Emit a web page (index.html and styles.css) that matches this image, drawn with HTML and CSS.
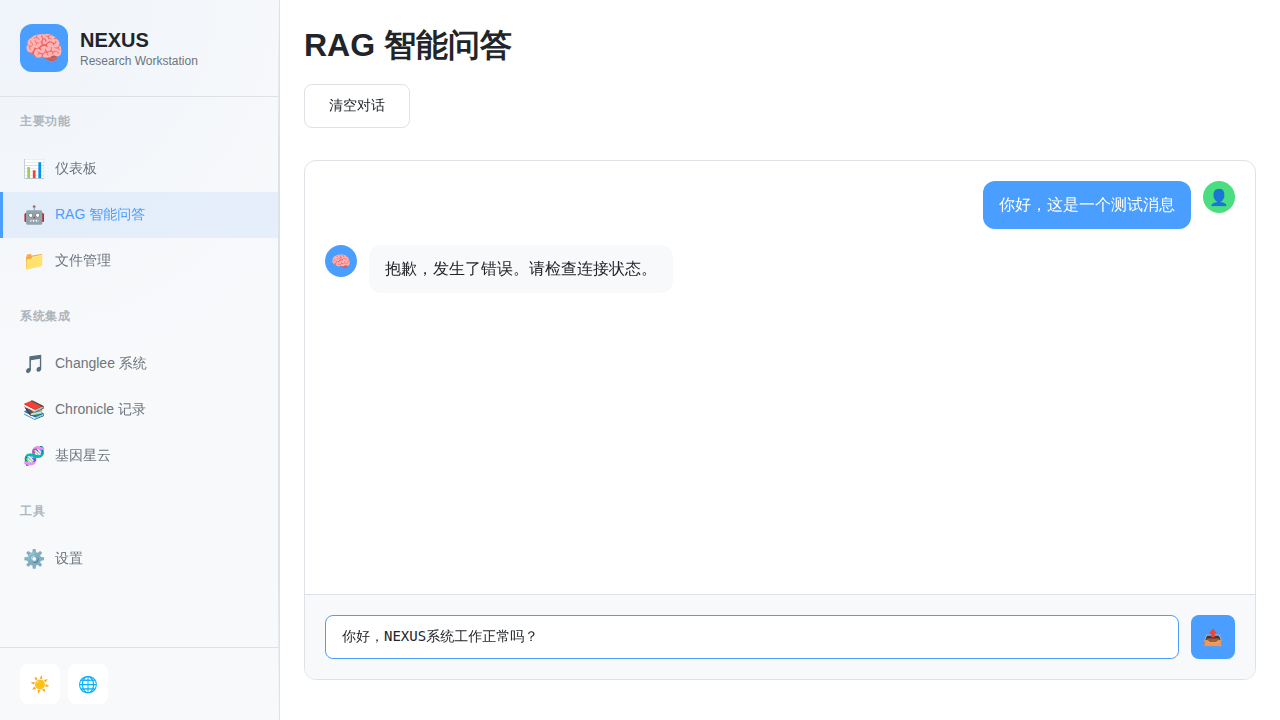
FILE: index.html
```html
<!DOCTYPE html>
<html lang="en">
<head>
<meta charset="utf-8">
<title>NEXUS Research Workstation</title>
<link rel="stylesheet" href="styles.css">
</head>
<body>
<div class="app">
  <aside class="sidebar">
    <header class="brand">
      <div class="brand-logo">🧠</div>
      <div class="brand-text">
        <div class="brand-name">NEXUS</div>
        <div class="brand-sub">Research Workstation</div>
      </div>
    </header>
    <nav class="nav">
      <section class="nav-section">
        <h2 class="nav-title">主要功能</h2>
        <a class="nav-item" href="#dashboard"><span class="nav-icon">📊</span><span class="nav-label">仪表板</span></a>
        <a class="nav-item active" href="#rag" aria-current="page"><span class="nav-icon">🤖</span><span class="nav-label">RAG 智能问答</span></a>
        <a class="nav-item" href="#files"><span class="nav-icon">📁</span><span class="nav-label">文件管理</span></a>
      </section>
      <section class="nav-section">
        <h2 class="nav-title">系统集成</h2>
        <a class="nav-item" href="#changlee"><span class="nav-icon">🎵</span><span class="nav-label">Changlee 系统</span></a>
        <a class="nav-item" href="#chronicle"><span class="nav-icon">📚</span><span class="nav-label">Chronicle 记录</span></a>
        <a class="nav-item" href="#genome"><span class="nav-icon">🧬</span><span class="nav-label">基因星云</span></a>
      </section>
      <section class="nav-section">
        <h2 class="nav-title">工具</h2>
        <a class="nav-item" href="#settings"><span class="nav-icon">⚙️</span><span class="nav-label">设置</span></a>
      </section>
    </nav>
    <footer class="sidebar-footer">
      <button class="tool-btn" type="button" aria-label="切换主题">☀️</button>
      <button class="tool-btn" type="button" aria-label="切换语言">🌐</button>
    </footer>
  </aside>
  <main class="main">
    <h1 class="page-title">RAG 智能问答</h1>
    <div class="actions"><button class="btn" type="button">清空对话</button></div>
    <section class="chat">
      <div class="messages">
        <div class="message user">
          <div class="avatar">👤</div>
          <div class="bubble">你好，这是一个测试消息</div>
        </div>
        <div class="message">
          <div class="avatar">🧠</div>
          <div class="bubble">抱歉，发生了错误。请检查连接状态。</div>
        </div>
      </div>
      <form class="composer">
        <textarea class="composer-input" rows="1" aria-label="消息">你好，NEXUS系统工作正常吗？</textarea>
        <button class="send-btn" type="button" aria-label="发送">📤</button>
      </form>
    </section>
  </main>
</div>
</body>
</html>
```
FILE: styles.css
```css
* { box-sizing: border-box; margin: 0; padding: 0; }

body {
  font-family: "Liberation Sans", "WenQuanYi Zen Hei", "Noto Sans CJK SC", sans-serif;
  font-size: 16px;
  line-height: 24px;
  color: #212529;
  background: #fff;
}

.app { display: flex; height: 100vh; }

.sidebar {
  position: relative;
  display: flex;
  flex-direction: column;
  flex: none;
  width: 280px;
  background: #f8f9fb;
  background-image: radial-gradient(circle at 0 0, #eff4fa, #f8f9fb 380px);
  border-right: 1px solid #dee2e6;
}

.sidebar::after {
  position: absolute;
  top: 0;
  right: 0;
  bottom: 0;
  width: 1px;
  content: "";
  background: linear-gradient(transparent, #dee2e6 20%, #dee2e6 80%, transparent);
}

.brand {
  display: flex;
  align-items: center;
  gap: 12px;
  padding: 24px 20px;
  border-bottom: 1px solid #dee2e6;
}

.brand-logo {
  display: flex;
  align-items: center;
  justify-content: center;
  width: 48px;
  height: 48px;
  font-size: 32px;
  background: #4a9eff;
  border-radius: 12px;
}

.brand-name { font-size: 20px; font-weight: 700; line-height: 26px; }
.brand-sub { font-size: 12px; line-height: 16px; color: #6c757d; }

.nav { flex: 1; padding: 16px 0; overflow: hidden; }
.nav-section { margin-bottom: 24px; }

.nav-title,
.page-title { font-family: "Liberation Sans", sans-serif; }

.nav-title {
  padding: 0 20px;
  margin-bottom: 17px;
  font-size: 12px;
  line-height: 16px;
  letter-spacing: 0.5px;
  color: #adb5bd;
}

.nav-item {
  display: flex;
  align-items: center;
  gap: 11px;
  height: 46px;
  padding: 0 20px;
  font-size: 14px;
  line-height: 21px;
  color: #6c757d;
  text-decoration: none;
  border-left: 3px solid transparent;
}

.nav-item.active {
  color: #4a9eff;
  background: rgba(74, 158, 255, 0.1);
  border-left-color: #4a9eff;
}

.nav-icon { width: 21px; font-size: 18px; text-align: center; }
.nav-label { padding-bottom: 2px; }

.sidebar-footer {
  display: flex;
  gap: 8px;
  padding: 16px 20px;
  border-top: 1px solid #dee2e6;
}

.tool-btn {
  width: 40px;
  height: 40px;
  font-family: inherit;
  font-size: 16px;
  background: #fff;
  border: 0;
  border-radius: 8px;
}

.main {
  display: flex;
  flex: 1;
  flex-direction: column;
  min-width: 0;
  padding: 24px 24px 40px;
}

.page-title { margin-bottom: 18px; font-size: 32px; line-height: 42px; }
.actions { margin-bottom: 32px; }

.btn {
  height: 44px;
  padding: 0 24px;
  font-family: inherit;
  font-size: 14px;
  color: #212529;
  background: #fff;
  border: 1px solid #dee2e6;
  border-radius: 8px;
}

.chat {
  display: flex;
  flex: 1;
  flex-direction: column;
  min-height: 0;
  overflow: hidden;
  border: 1px solid #dee2e6;
  border-radius: 12px;
}

.messages {
  display: flex;
  flex: 1;
  flex-direction: column;
  gap: 16px;
  min-height: 0;
  padding: 20px;
}

.message { display: flex; gap: 12px; align-items: flex-start; }
.message.user { flex-direction: row-reverse; }

.avatar {
  display: flex;
  align-items: center;
  justify-content: center;
  flex: none;
  width: 32px;
  height: 32px;
  font-size: 16px;
  line-height: 25px;
  background: #4a9eff;
  border-radius: 50%;
}

.user .avatar { background: #4ade80; }

.bubble {
  max-width: 70%;
  padding: 12px 16px;
  background: #f8f9fb;
  border-radius: 12px;
}

.user .bubble { color: #fff; background: #4a9eff; }

.composer {
  display: flex;
  gap: 12px;
  padding: 20px;
  background: #f8f9fb;
  border-top: 1px solid #dee2e6;
}

.composer-input {
  flex: 1;
  height: 44px;
  padding: 12px 16px;
  overflow: hidden;
  font-family: "DejaVu Sans Mono", "WenQuanYi Zen Hei", "Noto Sans CJK SC", monospace;
  font-size: 14px;
  line-height: 16px;
  color: #212529;
  resize: none;
  background: #fff;
  border: 1px solid #4a9eff;
  border-radius: 8px;
  outline: none;
}

.send-btn {
  width: 44px;
  height: 44px;
  font-family: inherit;
  font-size: 16px;
  background: #4a9eff;
  border: 0;
  border-radius: 8px;
}
```
